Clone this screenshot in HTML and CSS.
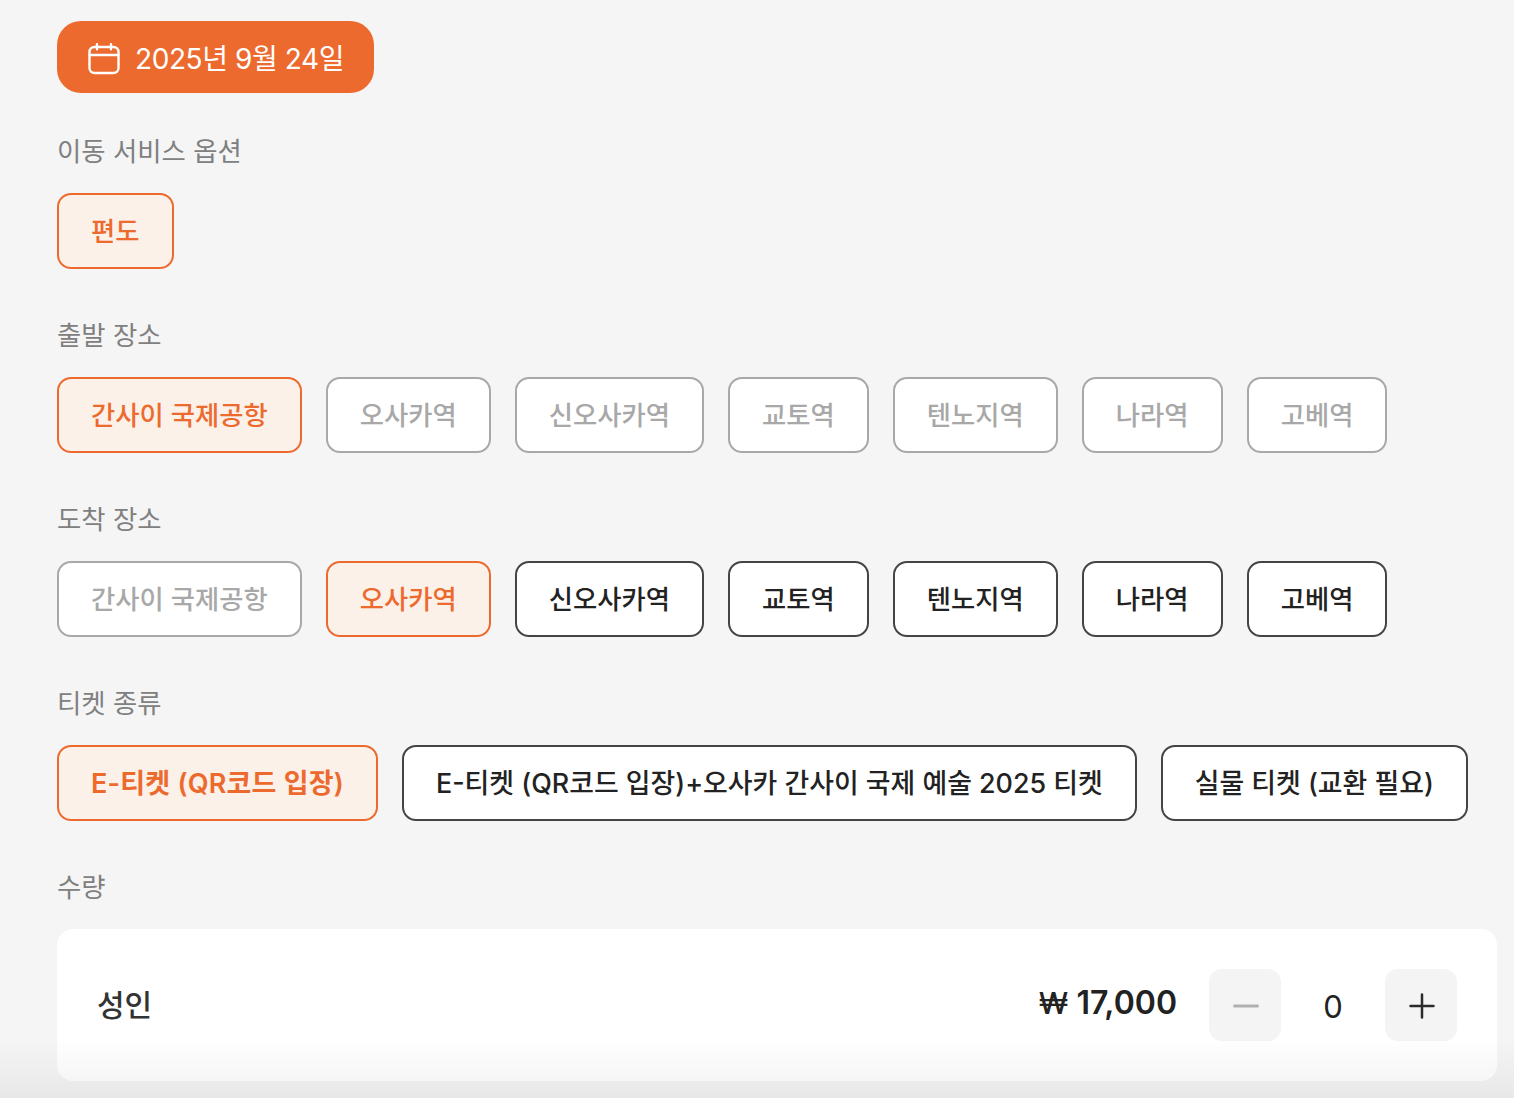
FILE: index.html
```html
<!DOCTYPE html>
<html lang="ko">
<head>
<meta charset="utf-8">
<title>티켓 옵션</title>
<link rel="stylesheet" href="styles.css">
</head>
<body>
<main class="page">
  <div class="date-pill">
    <svg class="cal" width="34" height="34" viewBox="0 0 34 34" fill="none" stroke="#fff" stroke-width="2.4" stroke-linecap="round" stroke-linejoin="round"><rect x="2.5" y="5" width="29" height="26" rx="5"/><path d="M2.5 13h29M10 2.2v5M24 2.2v5"/></svg>
    <span>2025년 9월 24일</span>
  </div>
  <section class="group">
    <h2 class="label">이동 서비스 옵션</h2>
    <div class="opts"><button class="opt sel">편도</button></div>
  </section>
  <section class="group">
    <h2 class="label">출발 장소</h2>
    <div class="opts">
      <button class="opt sel">간사이 국제공항</button>
      <button class="opt off">오사카역</button>
      <button class="opt off">신오사카역</button>
      <button class="opt off">교토역</button>
      <button class="opt off">텐노지역</button>
      <button class="opt off">나라역</button>
      <button class="opt off">고베역</button>
    </div>
  </section>
  <section class="group">
    <h2 class="label">도착 장소</h2>
    <div class="opts">
      <button class="opt off">간사이 국제공항</button>
      <button class="opt sel">오사카역</button>
      <button class="opt">신오사카역</button>
      <button class="opt">교토역</button>
      <button class="opt">텐노지역</button>
      <button class="opt">나라역</button>
      <button class="opt">고베역</button>
    </div>
  </section>
  <section class="group">
    <h2 class="label">티켓 종류</h2>
    <div class="opts">
      <button class="opt sel strong">E-티켓 (QR코드 입장)</button>
      <button class="opt strong">E-티켓 (QR코드 입장)+오사카 간사이 국제 예술 2025 티켓</button>
      <button class="opt strong">실물 티켓 (교환 필요)</button>
    </div>
  </section>
  <section class="group">
    <h2 class="label">수량</h2>
    <div class="card">
      <span class="who">성인</span>
      <span class="price"><span class="won">₩</span> 17,000</span>
      <div class="stepper">
        <button class="step minus" aria-label="감소"><svg class="ico" width="26" height="26" viewBox="0 0 26 26"><path d="M1.5 13h23" stroke="#b0b0b0" stroke-width="3" stroke-linecap="round"/></svg></button>
        <span class="qty">0</span>
        <button class="step" aria-label="증가"><svg class="ico" width="26" height="26" viewBox="0 0 26 26"><path d="M1.5 13h23M13 1.5v23" stroke="#2b2b2b" stroke-width="2.5" stroke-linecap="round"/></svg></button>
      </div>
    </div>
  </section>
</main>
<div class="fade"></div>
</body>
</html>
```
FILE: styles.css
```css
* { box-sizing: border-box; }
html, body { margin: 0; height: 1098px; overflow: hidden; }
body {
  background: #f5f5f5;
  font-family: Inter, "Noto Sans CJK KR", "Noto Sans", sans-serif;
  color: #222;
}
.page { padding: 21px 17px 0 57px; }
.date-pill {
  display: inline-flex;
  align-items: center;
  gap: 14px;
  height: 72px;
  padding: 0 30px;
  border-radius: 24px;
  background: #ed6a2e;
  color: #fff;
  font-size: 28px;
  letter-spacing: -0.4px;
  vertical-align: top;
}
.cal { margin-top: 3px; }
.group { margin-top: 39px; }
.group + .group { margin-top: 47px; }
.label {
  margin: 0 0 23px;
  font-size: 26.4px;
  font-weight: 400;
  line-height: 38px;
  color: #808080;
}
.opts { display: flex; gap: 24px; }
.opt {
  height: 76px;
  padding: 0 32px 3px;
  border: 2px solid #444;
  border-radius: 14px;
  background: #fff;
  font: 500 26.36px Inter, "Noto Sans CJK KR", sans-serif;
  color: #222;
  white-space: nowrap;
}
.opt.strong { font-size: 26.88px; }
.opt.off { border-color: #a8a8a8; color: #a8a8a8; }
.opt.sel { border-color: #ed6a2e; background: #fbf1e9; color: #ed6a2e; }
.opt.sel.strong { font-size: 27px; font-weight: 600; letter-spacing: .2px; }
.card {
  display: flex;
  align-items: center;
  height: 152px;
  padding: 0 40px;
  border-radius: 16px;
  background: #fff;
}
.who { flex: 1; margin-bottom: 4px; font-size: 30px; font-weight: 500; color: #333; }
.price { margin: 0 32px 6px 0; font-size: 32px; font-weight: 600; color: #222; }
.won { font-size: 30px; font-weight: 500; }
.stepper { display: flex; align-items: center; }
.step {
  display: flex;
  align-items: center;
  justify-content: center;
  width: 72px;
  height: 72px;
  padding: 0;
  border: 0;
  border-radius: 13px;
  background: #f4f4f4;
}
.ico { margin: 2px 0 0 2px; }
.qty { width: 104px; margin-top: 2px; text-align: center; font-size: 31px; color: #222; }
.fade {
  position: fixed;
  left: 0;
  right: 0;
  bottom: 0;
  height: 60px;
  background: linear-gradient(rgba(0,0,0,0), rgba(0,0,0,.05));
  pointer-events: none;
}
```
